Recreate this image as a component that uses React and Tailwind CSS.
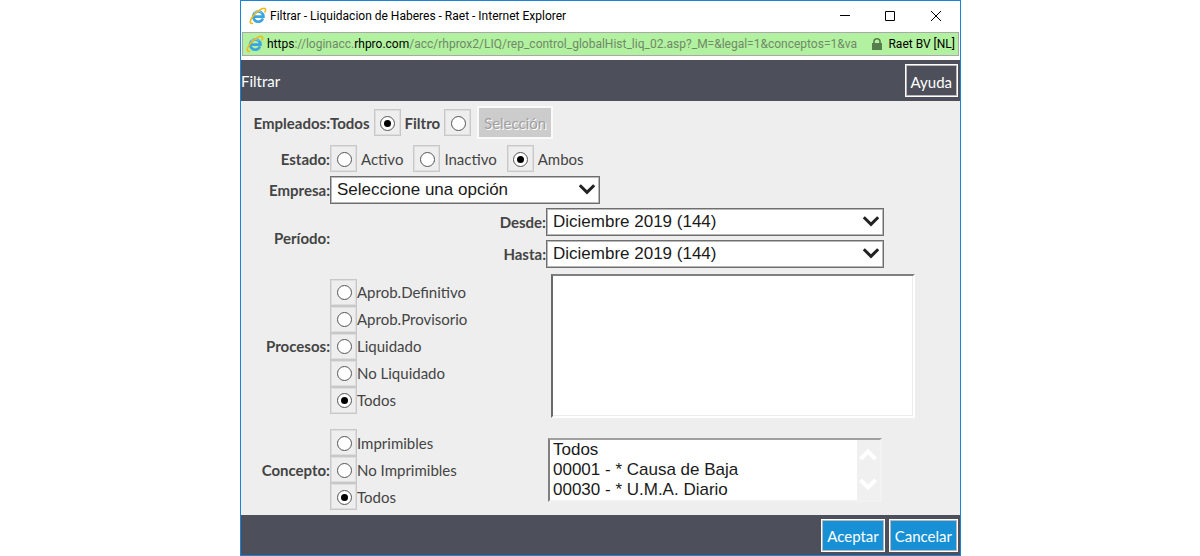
import React from "react";

function ExplorerIcon() {
  return (
    <svg width="18" height="18" viewBox="0 0 18 18" aria-hidden="true" className="shrink-0">
      <path
        d="M14 11.6A5.1 5.1 0 1 1 14.4 9.6H5.4"
        fill="none"
        stroke="#3aa5df"
        strokeWidth="2.7"
      />
      <path d="M5 6.2A5.2 5.2 0 0 1 12.6 5.6" fill="none" stroke="#8ad6f7" strokeWidth="1" />
      <path
        d="M3.4 16.4C1 16.8 0.6 14.6 2.6 11.2C5.4 6.4 11.6 1.2 15.2 1.2C16.9 1.3 16.9 3 16 5"
        fill="none"
        stroke="#f2b91d"
        strokeWidth="1.6"
        strokeLinecap="round"
      />
    </svg>
  );
}

function Radio({ name, label, checked, className = "", before = false }) {
  return (
    <label className={`flex items-center ${before ? "flex-row-reverse" : ""} ${className}`}>
      <span className="flex h-[27px] w-[27px] shrink-0 items-center justify-center border border-[#c8c8c8] pl-px pt-px shadow-[inset_0_0_0_1px_#dedede]">
        <input
          type="radio"
          name={name}
          defaultChecked={checked}
          className="grid h-[15px] w-[15px] appearance-none place-content-center rounded-full border border-[#555555] bg-white before:h-[7px] before:w-[7px] before:rounded-full before:content-[''] checked:before:bg-black"
        />
      </span>
      <span>{label}</span>
    </label>
  );
}

function Dropdown({ id, children, className }) {
  return (
    <div className={`relative ${className}`}>
      <select
        id={id}
        className="block h-7 w-full appearance-none border border-[#6e6e6e] bg-white px-[6px] font-['Liberation_Sans',sans-serif] text-[17px] leading-6 text-[#1a1a1a] shadow-[inset_0_0_0_1px_#b8b8b8]"
      >
        {children}
      </select>
      <svg
        width="16"
        height="11"
        viewBox="0 0 16 11"
        aria-hidden="true"
        className="pointer-events-none absolute right-[5px] top-2"
      >
        <path d="M.8 1.2L8 8.4L15.2 1.2" fill="none" stroke="#222222" strokeWidth="3" />
      </svg>
    </div>
  );
}

function RowLabel({ children, ...rest }) {
  return (
    <label className="w-[89px] shrink-0 text-right font-bold" {...rest}>
      {children}
    </label>
  );
}

function GroupLabel({ children }) {
  return <span className="w-[89px] shrink-0 text-right font-bold">{children}</span>;
}

function BarButton({ children, className = "" }) {
  return (
    <button
      type="button"
      className={`h-[33px] border border-white px-[5px] pt-[2px] shadow-[inset_0_0_0_1px_#b9b9bd] ${className}`}
    >
      {children}
    </button>
  );
}

const stages = ["Aprob.Definitivo", "Aprob.Provisorio", "Liquidado", "No Liquidado", "Todos"];
const concepts = ["Imprimibles", "No Imprimibles", "Todos"];

export default function App() {
  return (
    <div className="min-h-screen bg-white pl-px">
      <div className="mx-auto max-w-[721px] border border-[#1883d7] bg-white font-['Lato',sans-serif] text-[15px] leading-5 text-[#444444]">
        <div className="flex h-[30px] items-center pl-2 font-['Roboto',sans-serif] text-xs text-black">
          <ExplorerIcon />
          <h1 className="ml-[3px] flex-1">Filtrar - Liquidacion de Haberes - Raet - Internet Explorer</h1>
          <button type="button" aria-label="Minimizar" className="flex h-full w-[46px] items-center justify-center">
            <svg width="10" height="10" viewBox="0 0 10 10"><path d="M0 4.5H10" stroke="#000" /></svg>
          </button>
          <button type="button" aria-label="Maximizar" className="flex h-full w-11 items-center justify-center">
            <svg width="10" height="10" viewBox="0 0 10 10"><path d="M.5 .5H9.5V9.5H.5Z" stroke="#000" fill="none" /></svg>
          </button>
          <button type="button" aria-label="Cerrar" className="flex h-full w-12 items-center justify-center">
            <svg width="10" height="10" viewBox="0 0 10 10"><path d="M0 0L10 10M10 0L0 10" stroke="#000" /></svg>
          </button>
        </div>

        <div className="mx-px mt-px flex h-6 items-center border border-[#a9a9a9] bg-[#b2f19f] px-[3px] font-['Roboto',sans-serif] text-xs text-black">
          <ExplorerIcon />
          <span className="ml-[3px] flex-1 truncate text-[#6f8a68]">
            <span className="text-black">https</span>://loginacc.<span className="text-black">rhpro.com</span>
            /acc/rhprox2/LIQ/rep_control_globalHist_liq_02.asp?_M=&amp;legal=1&amp;conceptos=1&amp;va
          </span>
          <svg width="10" height="12" viewBox="0 0 10 12" aria-hidden="true" className="mr-[6px] shrink-0">
            <path d="M0 5H10V12H0Z" fill="#567d4c" />
            <path d="M2 5.5V3.5A3 2.7 0 0 1 8 3.5V5.5" fill="none" stroke="#567d4c" strokeWidth="1.6" />
          </svg>
          <span className="shrink-0">Raet BV [NL]</span>
        </div>

        <header className="mt-1 flex h-[41px] items-center justify-between bg-[#4d505b] pr-[2px] text-white">
          <h2>Filtrar</h2>
          <BarButton>Ayuda</BarButton>
        </header>

        <form className="flex flex-col bg-[#eeeeee] pb-[5px] pt-1">
          <div className="flex h-[35px] items-center">
            <GroupLabel>Empleados:</GroupLabel>
            <Radio name="empleados" label="Todos" checked before className="gap-1 font-bold" />
            <Radio name="empleados" label="Filtro" before className="ml-1 gap-1 font-bold" />
            <button
              type="button"
              disabled
              className="ml-[6px] h-[33px] w-[76px] border-2 border-[#fafafa] bg-[#cccccc] text-[#a0a0a0] [text-shadow:1px_1px_0_#fff]"
            >
              Selección
            </button>
          </div>

          <div className="mt-[5px] flex items-center">
            <GroupLabel>Estado:</GroupLabel>
            <Radio name="estado" label="Activo" className="gap-1" />
            <Radio name="estado" label="Inactivo" className="ml-[10px] gap-1" />
            <Radio name="estado" label="Ambos" checked className="ml-[10px] gap-1" />
          </div>

          <div className="mt-1 flex items-center">
            <RowLabel htmlFor="empresa">Empresa:</RowLabel>
            <Dropdown id="empresa" className="w-[270px]">
              <option>Seleccione una opción</option>
            </Dropdown>
          </div>

          <div className="mt-1 flex items-center">
            <GroupLabel>Período:</GroupLabel>
            <div className="flex flex-1 flex-col gap-1">
              <div className="flex items-center">
                <label htmlFor="desde" className="w-[216px] text-right font-bold">Desde:</label>
                <Dropdown id="desde" className="w-[338px]"><option>Diciembre 2019 (144)</option></Dropdown>
              </div>
              <div className="flex items-center">
                <label htmlFor="hasta" className="w-[216px] text-right font-bold">Hasta:</label>
                <Dropdown id="hasta" className="w-[338px]"><option>Diciembre 2019 (144)</option></Dropdown>
              </div>
            </div>
          </div>

          <div className="mt-[6px] flex items-center">
            <GroupLabel>Procesos:</GroupLabel>
            <div className="w-[221px]">
              {stages.map((s) => (
                <Radio key={s} name="procesos" label={s} checked={s === "Todos"} />
              ))}
            </div>
            <select
              multiple
              aria-label="Procesos"
              className="h-36 w-[364px] border-2 border-b-white border-l-[#696969] border-r-white border-t-[#808080] bg-white shadow-[inset_-1px_-1px_0_#ececec]"
            />
          </div>

          <div className="mt-[11px] flex items-center">
            <GroupLabel>Concepto:</GroupLabel>
            <div className="w-[218px]">
              {concepts.map((s) => (
                <Radio key={s} name="concepto" label={s} checked={s === "Todos"} />
              ))}
            </div>
            <div className="flex h-16 w-[334px] border-2 border-b-[#f2f2f2] border-l-[#808080] border-r-[#f2f2f2] border-t-[#a0a0a0] bg-[#f0f0f0]">
              <select
                multiple
                size={3}
                aria-label="Concepto"
                className="h-[60px] flex-1 overflow-hidden bg-white pl-px font-['Liberation_Sans',sans-serif] text-[17px] leading-5 text-[#1a1a1a] [&>option]:h-5 [&>option]:p-0 [&>option]:pl-[2px] [&>option]:leading-5"
              >
                <option>Todos</option>
                <option>00001 - * Causa de Baja</option>
                <option>00030 - * U.M.A. Diario</option>
              </select>
              <svg width="23" height="60" viewBox="0 0 23 60" aria-hidden="true" className="shrink-0">
                <path d="M3.5 19L11 11.5L18.5 19M3.5 40L11 47.5L18.5 40" fill="none" stroke="#ffffff" strokeWidth="4" />
              </svg>
            </div>
          </div>
        </form>

        <footer className="flex h-10 items-center justify-end gap-1 bg-[#4d505b] pr-[2px] text-white">
          <BarButton className="bg-[#1890d5]">Aceptar</BarButton>
          <BarButton className="bg-[#1890d5]">Cancelar</BarButton>
        </footer>
      </div>
    </div>
  );
}
